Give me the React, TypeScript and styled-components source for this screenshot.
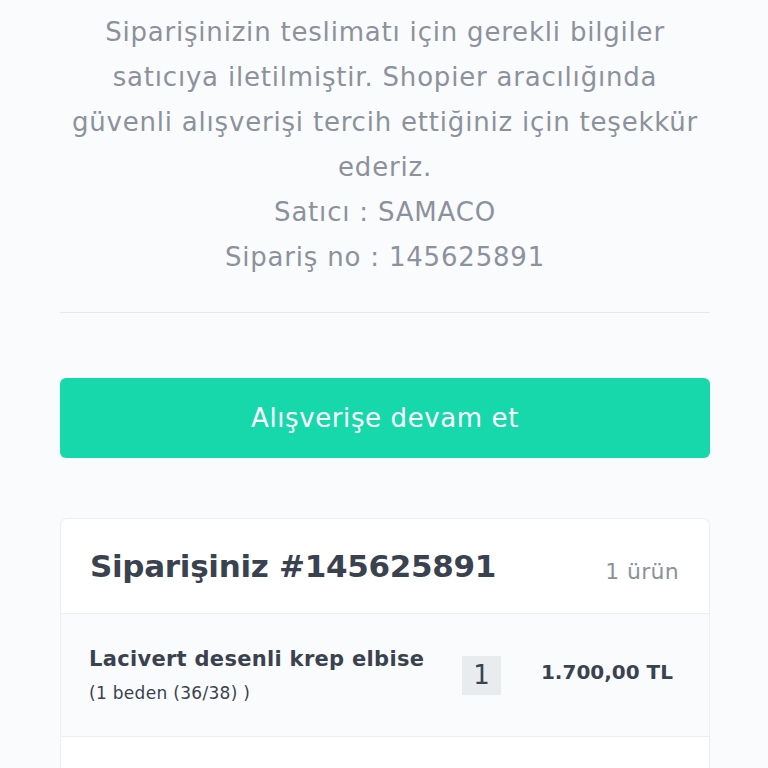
import React from "react";
import styled, { createGlobalStyle } from "styled-components";

const Global = createGlobalStyle`
  html, body { margin: 0; padding: 0; background: #fafbfc; }
  body { font-family: "DejaVu Sans", "Noto Sans", sans-serif; }
`;

const Page = styled.div`
  padding: 10px 58px 0 60px;
  display: flex;
  flex-direction: column;
`;

const Message = styled.div`
  text-align: center;
  color: #8c929c;
  font-size: 26px;
  letter-spacing: 0.8px;
  line-height: 45px;
  padding: 0 0 32px;
  border-bottom: 1px solid #e6e8eb;
`;

const Line = styled.p`
  margin: 0;
`;

const Button = styled.button`
  margin-top: 65px;
  height: 80px;
  border: none;
  border-radius: 6px;
  background: #16d8ab;
  color: #ffffff;
  font-family: inherit;
  font-size: 26px;
  letter-spacing: 0.6px;
  font-weight: 400;
`;

const Card = styled.div`
  margin-top: 60px;
  background: #ffffff;
  border: 1px solid #eceef0;
  border-bottom: none;
  border-radius: 7px 7px 0 0;
  display: flex;
  flex-direction: column;
`;

const CardHeader = styled.div`
  height: 94px;
  display: flex;
  align-items: center;
  justify-content: space-between;
  padding: 0 30px 0 29px;
  border-bottom: 1px solid #eceef0;
`;

const Title = styled.h2`
  margin: 0;
  font-size: 31px;
  letter-spacing: -0.3px;
  font-weight: 700;
  color: #3a4250;
`;

const Count = styled.span`
  font-size: 22px;
  letter-spacing: 0.3px;
  color: #8c929c;
  padding-top: 10px;
`;

const ItemRow = styled.div`
  height: 122px;
  background: #fafbfc;
  border-bottom: 1px solid #eceef0;
  display: flex;
  align-items: center;
  padding: 0 36px 0 28px;
`;

const ItemInfo = styled.div`
  flex: 1;
  display: flex;
  flex-direction: column;
  gap: 12px;
`;

const ItemName = styled.div`
  font-size: 21px;
  letter-spacing: 0.3px;
  font-weight: 700;
  color: #3a4250;
`;

const ItemVariant = styled.div`
  font-size: 17px;
  letter-spacing: 0.3px;
  color: #3a4250;
`;

const Qty = styled.div`
  width: 39px;
  height: 39px;
  background: #e9ecef;
  color: #3a4250;
  font-size: 26px;
  display: flex;
  align-items: center;
  justify-content: center;
  margin-right: 40px;
`;

const Price = styled.div`
  font-size: 20px;
  font-weight: 700;
  color: #3a4250;
  margin-top: -6px;
`;

const NextRow = styled.div`
  height: 40px;
  background: #ffffff;
`;

export default function App() {
  return (
    <>
      <Global />
      <Page>
        <Message>
          <Line>Siparişinizin teslimatı için gerekli bilgiler satıcıya iletilmiştir. Shopier aracılığında güvenli alışverişi tercih ettiğiniz için teşekkür ederiz.</Line>
          <Line>Satıcı : SAMACO</Line>
          <Line>Sipariş no : 145625891</Line>
        </Message>
        <Button>Alışverişe devam et</Button>
        <Card>
          <CardHeader>
            <Title>Siparişiniz #145625891</Title>
            <Count>1 ürün</Count>
          </CardHeader>
          <ItemRow>
            <ItemInfo>
              <ItemName>Lacivert desenli krep elbise</ItemName>
              <ItemVariant>(1 beden (36/38) )</ItemVariant>
            </ItemInfo>
            <Qty>1</Qty>
            <Price>1.700,00 TL</Price>
          </ItemRow>
          <NextRow />
        </Card>
      </Page>
    </>
  );
}
